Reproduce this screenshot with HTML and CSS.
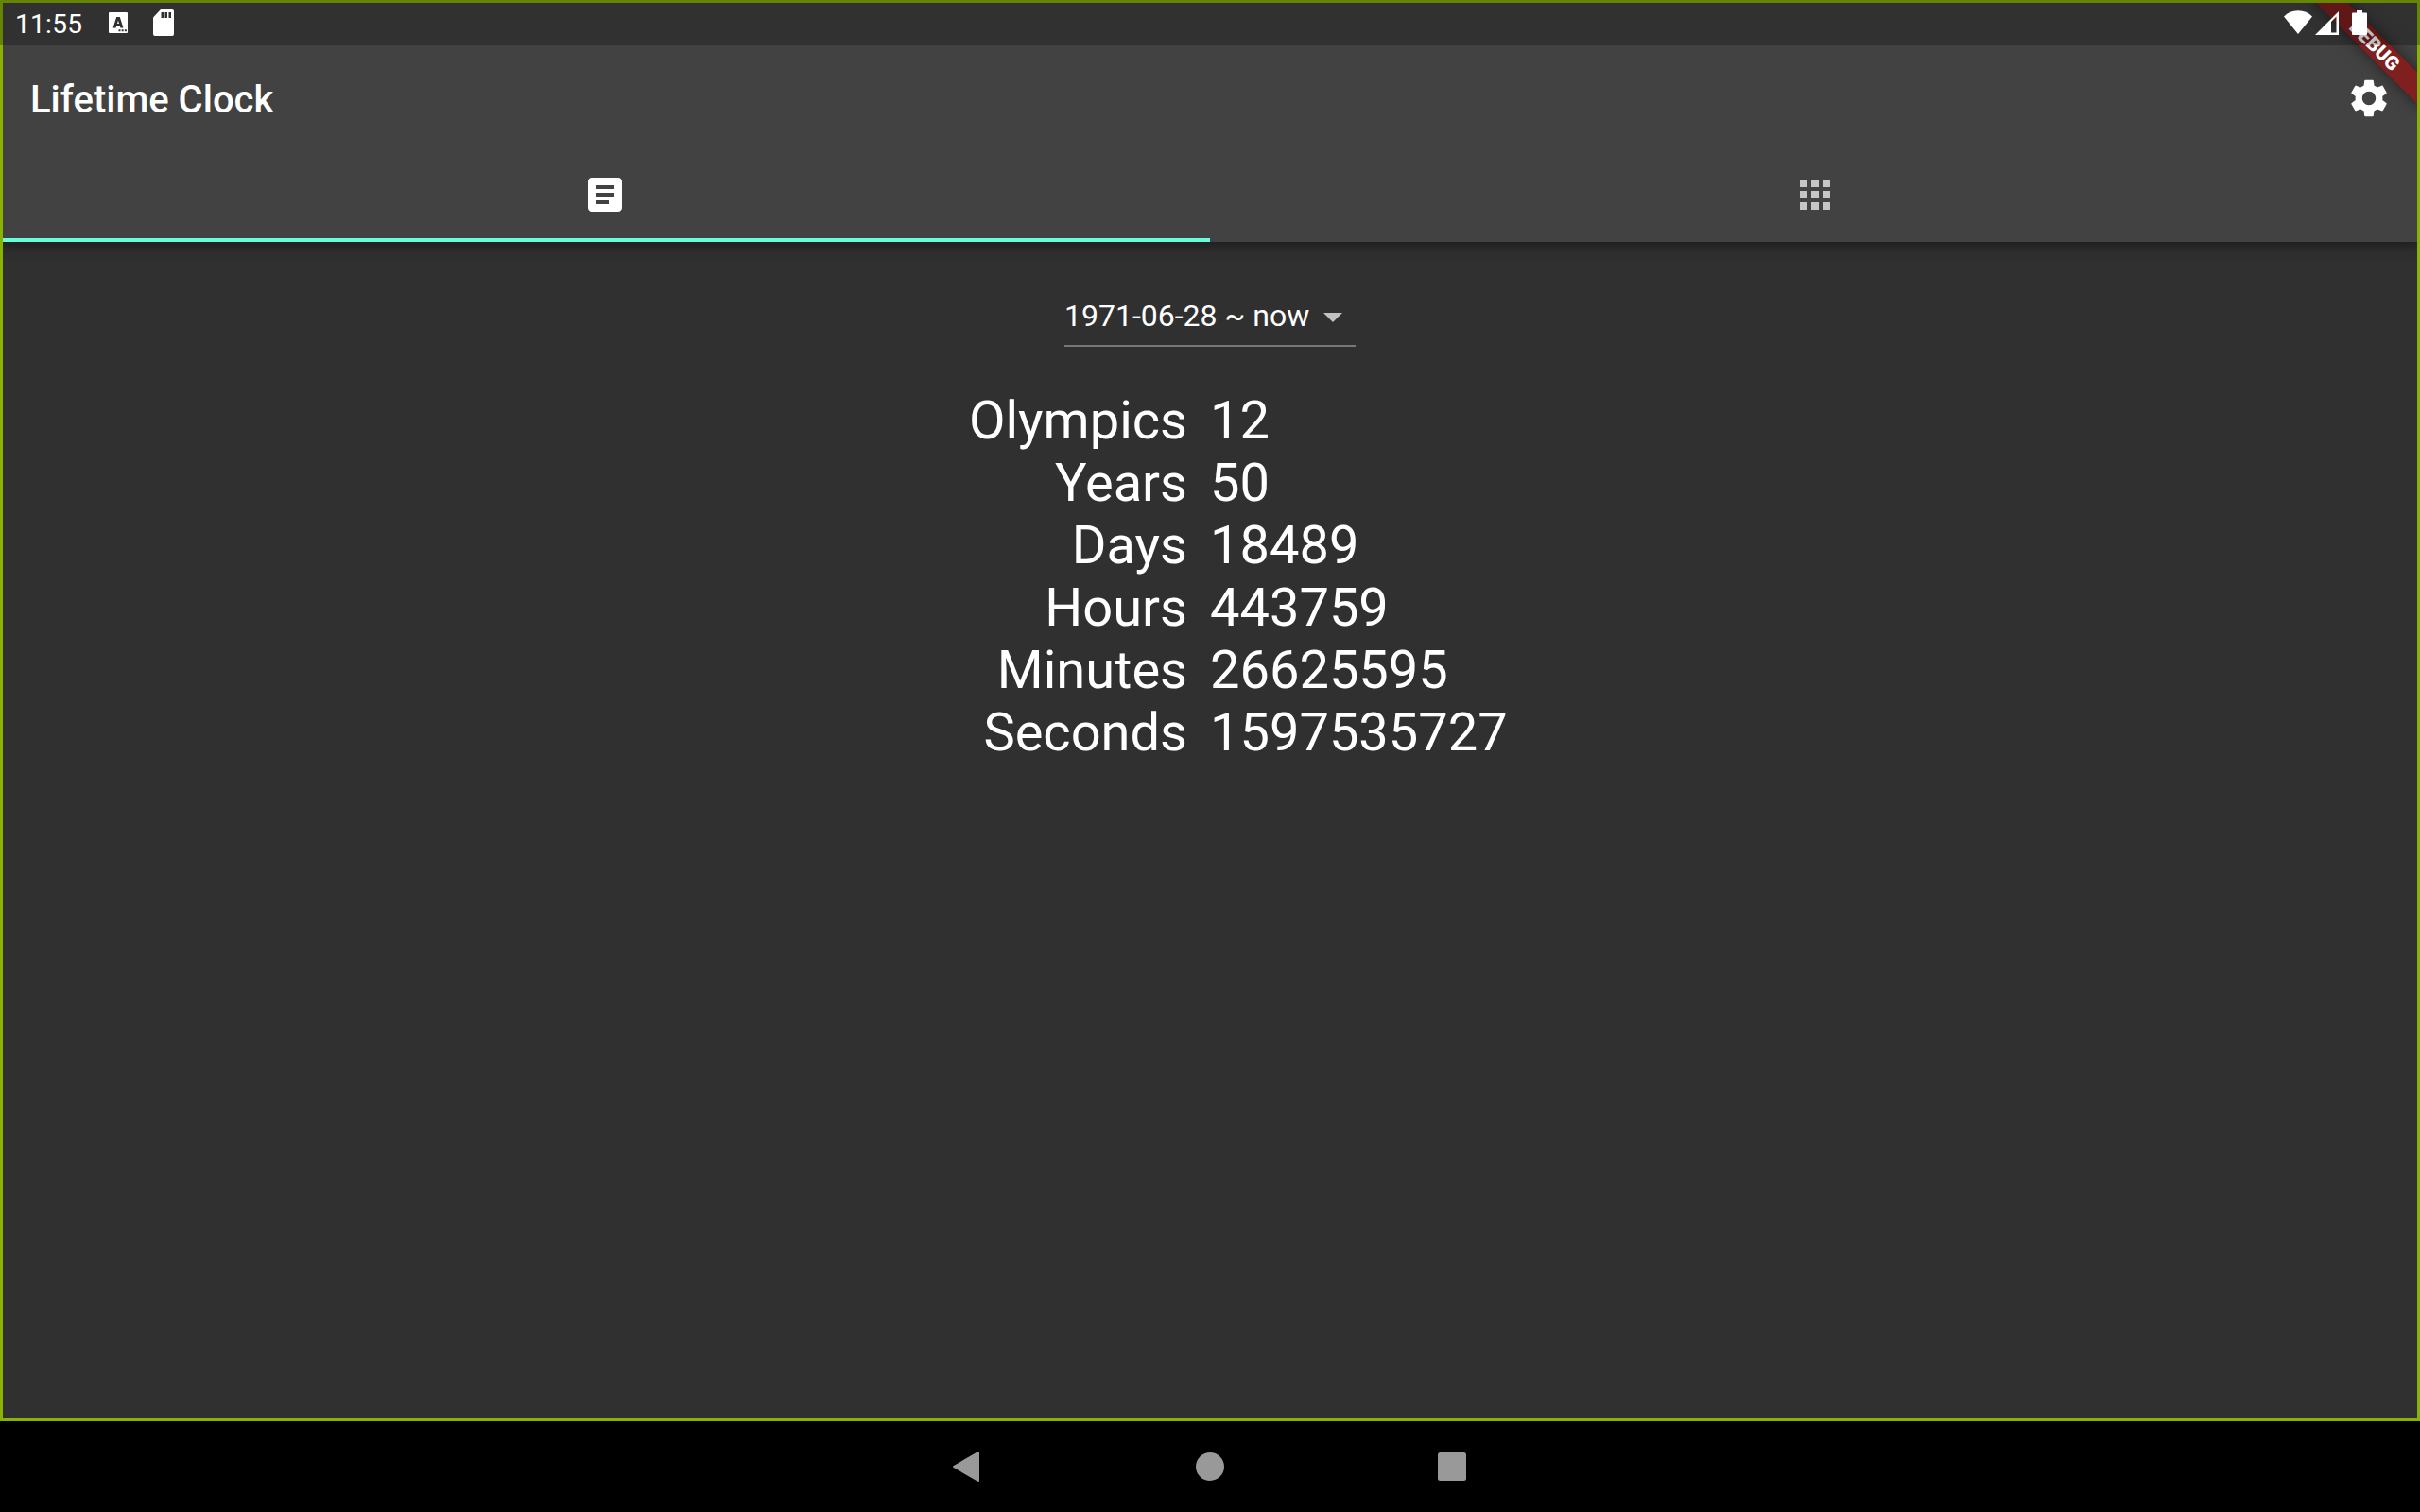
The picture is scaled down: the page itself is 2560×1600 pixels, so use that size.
FILE: index.html
```html
<!DOCTYPE html>
<html lang="en">
<head>
<meta charset="utf-8">
<title>Lifetime Clock</title>
<link rel="stylesheet" href="styles.css">
</head>
<body>
<div class="app">
  <header class="app-head">
    <div class="status-bar">
      <span class="time">11:55</span>
      <svg class="ic-lang" width="20" height="22" viewBox="0 0 20 22"><path fill="#fff" d="M1 0H19Q20 0 20 1V21Q20 22 19 22H1Q0 22 0 21V1Q0 0 1 0Z"/><path fill="#303030" fill-rule="evenodd" d="M8.200 5h3.600L15.400 16.500h-3l-.6-2H8.200l-.6 2H4.600zM10 8.400 9 12h2zM10.500 18.300h2v2h-2zM13.700 18.300h2v2h-2zM16.900 18.300h2v2h-2z"/></svg>
      <svg class="ic-sd" width="22" height="28" viewBox="0 0 22 28"><path fill="#fff" d="M8 0H20Q22 0 22 2V26Q22 28 20 28H2Q0 28 0 26V8.500Z"/><path fill="#303030" d="M8.500 3h2.500v6H8.500zM12.500 3H15v6h-2.500zM16.500 3H19v6h-2.500z"/></svg>
      <span class="fill"></span>
      <svg class="ic-wifi" width="30" height="25" viewBox="0 0 30 25"><path fill="#fff" d="M15 25 0 6.500C4 2.500 9 .3 15 .3s11 2.200 15 6.200z"/></svg>
      <svg class="ic-cell" width="25" height="25" viewBox="0 0 25 25"><path fill="#fff" fill-rule="evenodd" d="M25 0V25H0zM22.500 5.500 17 11V22.500h5.500z"/></svg>
      <svg class="ic-batt" width="16" height="26" viewBox="0 0 16 26"><path fill="#fff" d="M5 0h6v2.500h4q1 0 1 1V25q0 1-1 1H1q-1 0-1-1V3.500q0-1 1-1h4z"/></svg>
    </div>
    <div class="title-row">
      <h1>Lifetime Clock</h1>
      <svg width="48" height="48" viewBox="0 0 24 24"><path fill="#fff" d="M19.140 12.940c.04-.3.06-.61.06-.94 0-.32-.02-.64-.07-.94l2.030-1.580c.18-.14.23-.41.12-.61l-1.920-3.320c-.12-.22-.37-.29-.59-.22l-2.390.96c-.5-.38-1.030-.7-1.620-.94l-.36-2.540c-.04-.24-.24-.41-.48-.41h-3.840c-.24 0-.43.17-.47.41l-.36 2.540c-.59.24-1.130.57-1.620.94l-2.390-.96c-.22-.08-.47 0-.59.22L2.740 8.870c-.12.21-.08.47.12.61l2.030 1.580c-.05.3-.09.63-.09.94s.02.64.07.94l-2.030 1.580c-.18.14-.23.41-.12.61l1.920 3.320c.12.22.37.29.59.22l2.390-.96c.5.38 1.030.7 1.620.94l.36 2.540c.05.24.24.41.48.41h3.840c.24 0 .44-.17.47-.41l.36-2.540c.59-.24 1.130-.56 1.620-.94l2.390.96c.22.08.47 0 .59-.22l1.920-3.320c.12-.22.07-.47-.12-.61l-2.010-1.580zM12 15.600c-1.980 0-3.600-1.620-3.600-3.600s1.620-3.600 3.600-3.600 3.600 1.620 3.600 3.600-1.620 3.600-3.600 3.600z"/></svg>
    </div>
    <nav class="tabs">
      <div class="tab active"><svg width="48" height="48" viewBox="0 0 24 24"><path fill="#fff" d="M19 3H5c-1.100 0-2 .9-2 2v14c0 1.100.9 2 2 2h14c1.100 0 2-.9 2-2V5c0-1.100-.9-2-2-2zm-5 14H7v-2h7v2zm3-4H7v-2h10v2zm0-4H7V7h10v2z"/></svg></div>
      <div class="tab"><svg width="48" height="48" viewBox="0 0 24 24"><path fill="#c6c6c6" d="M4 8h4V4H4v4zm6 12h4v-4h-4v4zm-6 0h4v-4H4v4zm0-6h4v-4H4v4zm6 0h4v-4h-4v4zm6-10v4h4V4h-4zm-6 4h4V4h-4v4zm6 6h4v-4h-4v4zm0 6h4v-4h-4v4z"/></svg></div>
    </nav>
  </header>
  <main>
    <div class="dropdown"><span>1971-06-28 ~ now</span><svg width="48" height="48" viewBox="0 0 24 24"><path fill="#c1c1c1" d="M7 10l5 5 5-5z"/></svg></div>
    <dl class="stats">
      <dt>Olympics</dt><dd>12</dd>
      <dt>Years</dt><dd>50</dd>
      <dt>Days</dt><dd>18489</dd>
      <dt>Hours</dt><dd>443759</dd>
      <dt>Minutes</dt><dd>26625595</dd>
      <dt>Seconds</dt><dd>1597535727</dd>
    </dl>
  </main>
  <div class="banner">DEBUG</div>
  <div class="frame"></div>
  <div class="status-shade"></div>
</div>
<footer class="nav-bar">
  <svg width="36" height="36" viewBox="0 0 36 36"><path fill="#999" d="M30 3.500V32.500Q30 35 27.800 33.600L2.800 19Q1.200 18 2.800 17L27.800 2.400Q30 1 30 3.500Z"/></svg>
  <svg width="36" height="36" viewBox="0 0 36 36"><circle cx="18" cy="18" r="15" fill="#999"/></svg>
  <svg width="36" height="36" viewBox="0 0 36 36"><rect x="3" y="3" width="30" height="30" rx="2.500" fill="#999"/></svg>
</footer>
</body>
</html>
```
FILE: styles.css
```css
* { box-sizing: border-box; }
body { margin: 0; width: 2560px; height: 1600px; display: flex; flex-direction: column; background: #000; color: #fff; font-family: Roboto, sans-serif; overflow: hidden; }
svg { flex: none; }
.app { position: relative; flex: none; height: 1504px; background: #303030; overflow: hidden; display: flex; flex-direction: column; }
.app-head { position: relative; height: 256px; background: #424242; box-shadow: 0 4px 8px -2px rgba(0,0,0,.2), 0 8px 10px rgba(0,0,0,.14), 0 2px 20px rgba(0,0,0,.12); }
.status-bar { position: relative; z-index: 3; height: 48px; display: flex; align-items: flex-start; padding: 0 56px 0 16px; }
.time { width: 99px; font-size: 28px; line-height: 51px; letter-spacing: .3px; }
.fill { flex: 1; }
.ic-lang { margin: 13px 27px 0 0; }
.ic-sd { margin-top: 10px; }
.ic-wifi { margin: 11px 3px 0 0; }
.ic-cell { margin: 12px 14px 0 0; }
.ic-batt { margin-top: 11px; }
.title-row { height: 112px; padding: 0 30px 0 32px; display: flex; align-items: center; justify-content: space-between; }
h1 { margin: 0; padding-top: 4px; font-size: 40px; font-weight: 500; line-height: 48px; }
.tabs { display: flex; height: 96px; }
.tab { flex: 1; display: flex; justify-content: center; align-items: center; padding-bottom: 4px; }
.tab.active { padding-bottom: 0; border-bottom: 4px solid #64ffda; }
main { flex: 1; display: flex; flex-direction: column; align-items: center; padding-top: 48px; }
.dropdown { width: 308px; height: 63px; display: flex; align-items: center; justify-content: space-between; border-bottom: 2px solid #777; font-size: 32px; line-height: 38px; white-space: nowrap; }
.dropdown span { padding-bottom: 2px; }
.stats { width: 100%; margin: 45px 0 0; display: grid; grid-template-columns: 1fr 1fr; font-size: 56px; line-height: 66px; }
dt { text-align: right; padding-right: 24px; }
dd { margin: 0; }
.banner { position: absolute; left: 2432px; top: 36px; width: 160px; height: 24px; transform: rotate(45deg); background: linear-gradient(rgba(183,28,28,.627), rgba(183,28,28,.627)), rgba(0,0,0,.45); box-shadow: 0 0 16px rgba(0,0,0,.5); font-size: 20.4px; font-weight: 900; line-height: 24px; text-align: center; }
.frame { position: absolute; inset: 0; border: 3px solid #8ab300; }
.status-shade { position: absolute; left: 0; top: 0; width: 100%; height: 48px; background: rgba(0,0,0,.25); }
.nav-bar { height: 96px; display: flex; justify-content: center; align-items: center; gap: 220px; }
```
